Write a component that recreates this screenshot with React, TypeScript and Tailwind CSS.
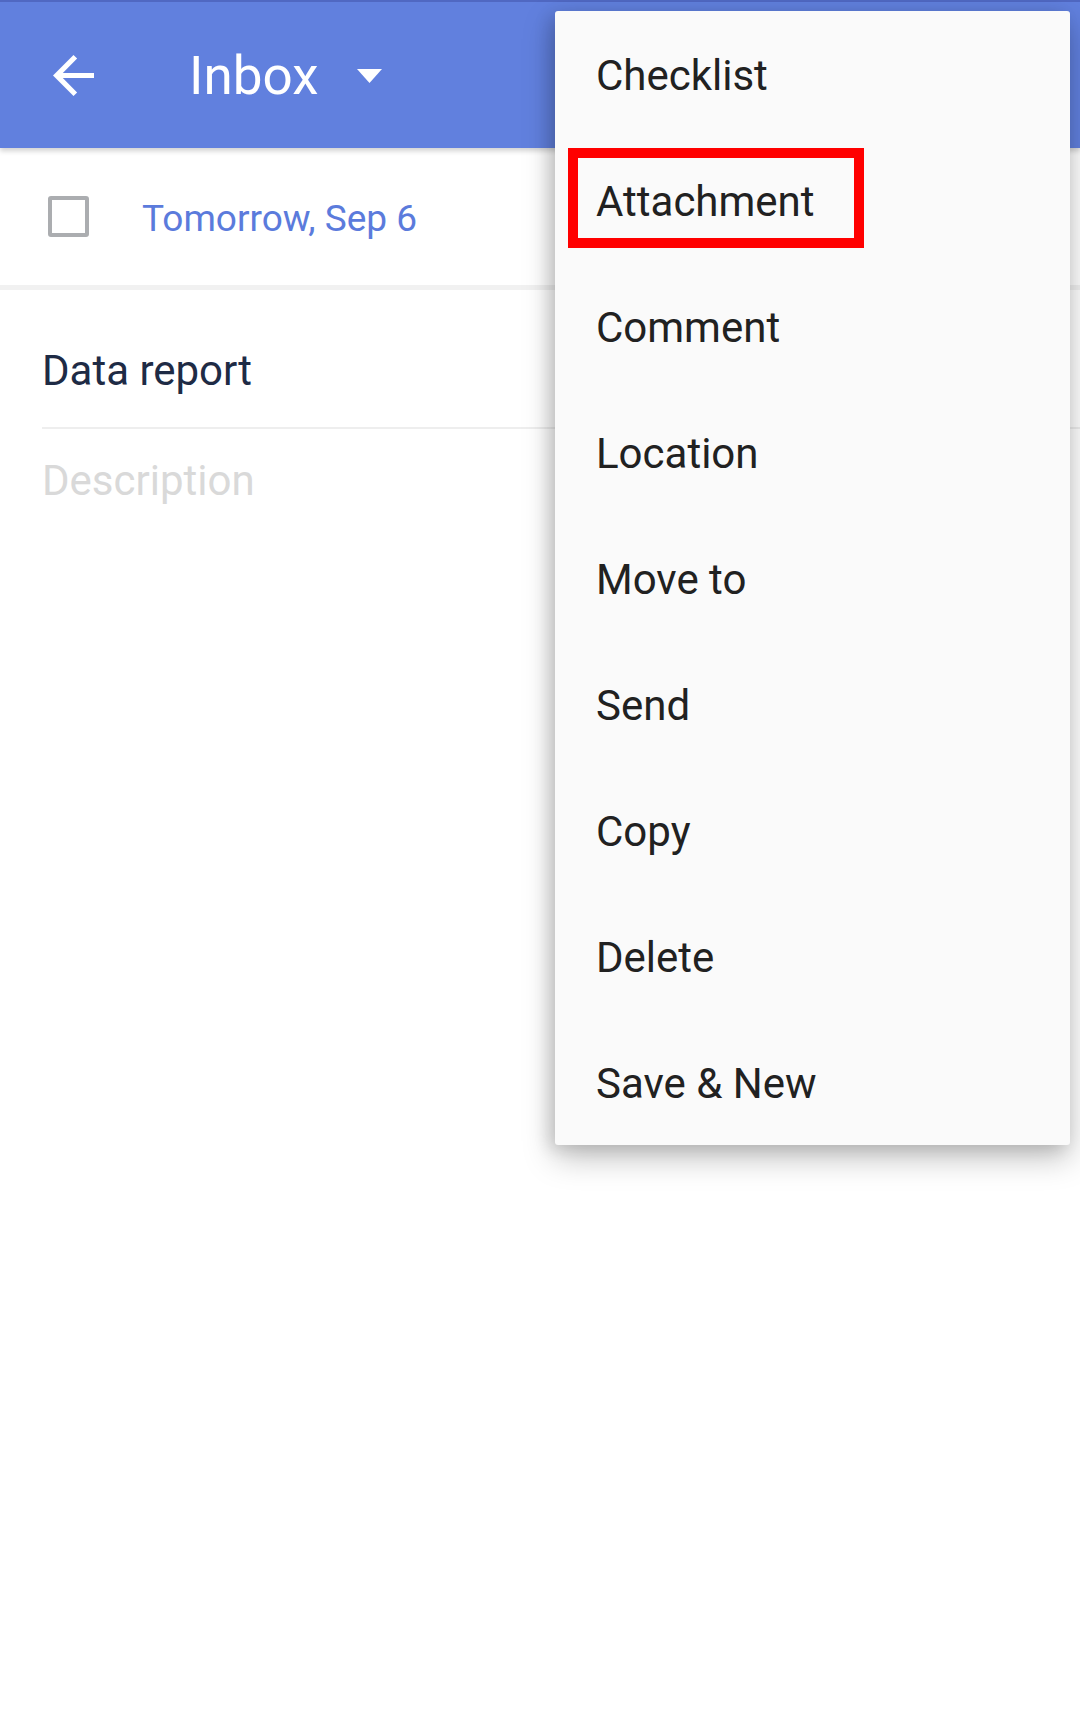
import React from "react";

const MENU_ITEMS = [
  "Checklist",
  "Attachment",
  "Comment",
  "Location",
  "Move to",
  "Send",
  "Copy",
  "Delete",
  "Save & New",
];

function BackArrow() {
  return (
    <svg width="41" height="41" viewBox="4 4 16 16" fill="#ffffff">
      <path d="M20 11H7.83l5.59-5.59L12 4l-8 8 8 8 1.41-1.41L7.83 13H20v-2z" />
    </svg>
  );
}

function Caret() {
  return (
    <svg width="25" height="14" viewBox="0 0 25 14" fill="#ffffff">
      <path d="M0 0h25L12.5 14z" />
    </svg>
  );
}

export default function App() {
  return (
    <div
      className="relative h-[1732px] w-[1080px] overflow-hidden bg-white"
      style={{ fontFamily: "Roboto, 'Noto Sans', sans-serif" }}
    >
      {/* toolbar */}
      <div className="relative z-10 flex h-[148px] items-center border-t-2 border-[#5068c2] bg-[#6180de] shadow-[0_3px_5px_rgba(0,0,0,0.18)]">
        <div className="ml-[53px] flex h-[41px] w-[41px] items-center">
          <BackArrow />
        </div>
        <div className="ml-[95px] mt-[2px] text-[53px] leading-none text-white">Inbox</div>
        <div className="ml-[39px] mt-[2px] flex">
          <Caret />
        </div>
      </div>

      {/* due date row */}
      <div className="flex h-[137px] items-center">
        <div className="ml-[48px] h-[41px] w-[41px] rounded-[3px] border-4 border-[#abadb0]" />
        <div className="ml-[53px] mt-[4px] text-[37px] leading-none text-[#5b7bdc]">Tomorrow, Sep 6</div>
      </div>
      <div className="h-[5px] bg-[#f1f1f1]" />

      {/* title and description */}
      <div className="pl-[42px]">
        <div className="border-b-2 border-[#eeeeee] pb-[35px] pt-[60px] text-[42px] leading-none text-[#1e2b45]">
          Data report
        </div>
        <div className="pt-[31px] text-[42px] leading-none text-[#d9d9d9]">Description</div>
      </div>

      {/* overflow menu */}
      <div className="absolute left-[555px] top-[11px] z-20 w-[515px] rounded-[3px] bg-[#fafafa] shadow-[0_12px_32px_rgba(0,0,0,0.26),-6px_4px_16px_rgba(0,0,0,0.12)]">
        {MENU_ITEMS.map((item) => (
          <div key={item} className="relative flex h-[126px] items-center pl-[41px] pt-[4px] text-[42px] leading-none text-[#212121]">
            {item === "Attachment" && (
              <div className="absolute left-[13px] top-[11px] h-[100px] w-[296px] border-[10px] border-[#ff0000]" />
            )}
            <span className="relative">{item}</span>
          </div>
        ))}
      </div>
    </div>
  );
}
